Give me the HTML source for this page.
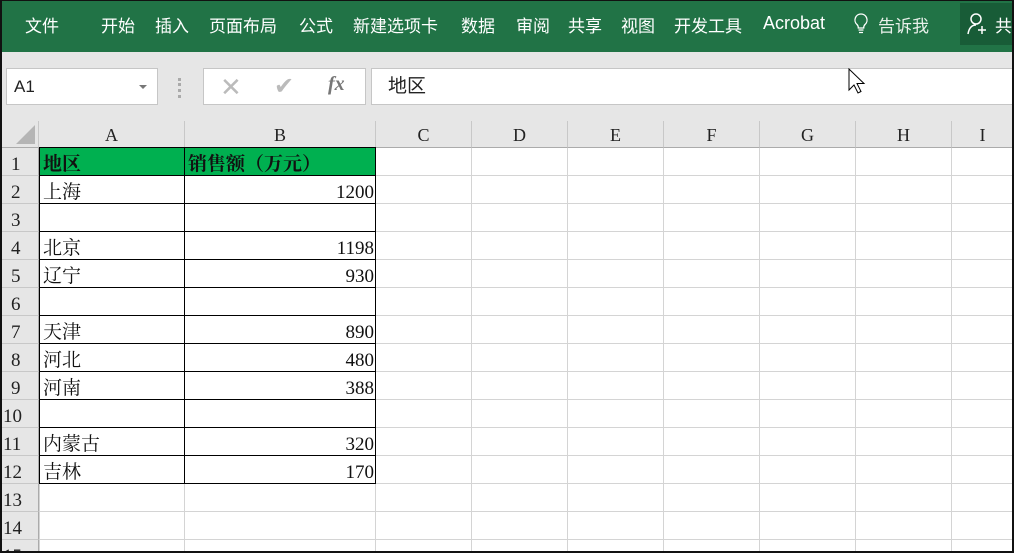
<!DOCTYPE html>
<html style="width:1014px;height:553px;overflow:hidden"><head><meta charset="utf-8"><style>
*{margin:0;padding:0;box-sizing:border-box}
body{width:1014px;height:553px;overflow:hidden;background:#fff;position:relative;font-family:"Liberation Sans","Noto Sans CJK SC",sans-serif}
.a{position:absolute}
#frame{left:0;top:0;width:1014px;height:553px;border:2px solid #111;border-top-width:1px;z-index:10;pointer-events:none}
#rib{left:0;top:0;width:1014px;height:52px;background:#217346;color:#fff;font-size:17px}
#rib span{position:absolute;top:12px;white-space:nowrap}
#gray{left:0;top:52px;width:1014px;height:69px;background:#e6e6e6}
.box{background:#fff;border:1px solid #c6c6c6}
.ser{font-family:"Liberation Serif","Noto Serif CJK SC",serif}
.ch{position:absolute;top:121px;height:27px;border-right:1px solid #c8c8c8;border-bottom:1px solid #ababab;background:#e6e6e6;text-align:center;font-size:18px;line-height:29px;color:#222}
.rh{position:absolute;left:2px;width:37px;height:28px;border-bottom:1px solid #c8c8c8;border-right:1px solid #ababab;background:#e6e6e6;font-size:19px;line-height:33px;padding-left:9px;color:#222;overflow:hidden}
.c{position:absolute;font-size:19px;line-height:35px;height:28px;white-space:nowrap;color:#111}
</style></head><body>
<div class="a" id="rib">
<span style="left:25px">文件</span><span style="left:101px">开始</span><span style="left:155px">插入</span><span style="left:209px">页面布局</span><span style="left:299px">公式</span><span style="left:353px">新建选项卡</span><span style="left:461px">数据</span><span style="left:516px">审阅</span><span style="left:568px">共享</span><span style="left:621px">视图</span><span style="left:674px">开发工具</span><span style="left:763px;top:13px;font-size:18px">Acrobat</span>
<svg class="a" style="left:853px;top:12px" width="16" height="24" viewBox="0 0 16 24"><path d="M8 2a6 6 0 0 0-4 10.5c1 1 1.3 2 1.3 3.5h5.4c0-1.5.3-2.5 1.3-3.5A6 6 0 0 0 8 2zM5.5 18h5M6 20.5h4" fill="none" stroke="#fff" stroke-width="1.3"/></svg>
<span style="left:878px;color:#e8f0ea">告诉我</span>
<div class="a" style="left:960px;top:3px;width:54px;height:42px;background:#185c37"></div>
<svg class="a" style="left:966px;top:12px" width="24" height="24" viewBox="0 0 24 24"><circle cx="10" cy="7" r="5" fill="none" stroke="#fff" stroke-width="1.5"/><path d="M2 22c1-6 4-9 8-9M16 14v8M12 18h8" fill="none" stroke="#fff" stroke-width="1.5"/></svg>
<span style="left:995px">共</span>
</div>
<div class="a" id="gray"></div>
<div class="a box" style="left:6px;top:68px;width:152px;height:37px;font-size:17px;line-height:36px;padding-left:7px;color:#222">A1</div>
<div class="a" style="left:139px;top:85px;width:0;height:0;border-left:4px solid transparent;border-right:4px solid transparent;border-top:4px solid #777"></div>
<div class="a" style="left:178px;top:78px;width:3px;height:20px;border-left:3px dotted #aaa"></div>
<div class="a box" style="left:203px;top:68px;width:163px;height:37px"></div>
<div class="a" style="left:220px;top:72px;font-size:26px;color:#bbb">✕</div>
<div class="a" style="left:274px;top:72px;font-size:24px;color:#bbb">✔</div>
<div class="a ser" style="left:328px;top:73px;font-size:20px;font-style:italic;font-weight:bold;color:#777">fx</div>
<div class="a box" style="left:371px;top:68px;width:643px;height:37px;font-size:19px;line-height:35px;padding-left:16px;color:#222">地区</div>
<svg class="a" style="left:848px;top:68px" width="20" height="28" viewBox="0 0 20 28"><path d="M1 1v21l5-5 4 8 3-1.5-4-8h7z" fill="#fff" stroke="#000" stroke-width="1"/></svg>
<div class="ch" style="left:2px;width:37px"><div class="a" style="right:3px;bottom:3px;width:0;height:0;border-left:19px solid transparent;border-bottom:19px solid #b5b5b5"></div></div>
<div class="ch ser" style="left:39px;width:146px">A</div>
<div class="ch ser" style="left:185px;width:191px">B</div>
<div class="ch ser" style="left:376px;width:96px">C</div>
<div class="ch ser" style="left:472px;width:96px">D</div>
<div class="ch ser" style="left:568px;width:96px">E</div>
<div class="ch ser" style="left:664px;width:96px">F</div>
<div class="ch ser" style="left:760px;width:96px">G</div>
<div class="ch ser" style="left:856px;width:96px">H</div>
<div class="ch ser" style="left:952px;width:62px">I</div>
<svg class="a" style="left:0;top:0" width="1014" height="553">
<g stroke="#d4d4d4" stroke-width="1">
<path d="M39.5 148v405M184.5 148v405M375.5 148v405M471.5 148v405M567.5 148v405M663.5 148v405M759.5 148v405M855.5 148v405M951.5 148v405"/>
<path d="M39 175.5h975M39 203.5h975M39 231.5h975M39 259.5h975M39 287.5h975M39 315.5h975M39 343.5h975M39 371.5h975M39 399.5h975M39 427.5h975M39 455.5h975M39 483.5h975M39 511.5h975M39 539.5h975"/>
</g>
<rect x="39" y="148" width="337" height="27" fill="#00b050"/>
<g stroke="#000" stroke-width="1" fill="none">
<rect x="39.5" y="147.5" width="336" height="336"/>
<path d="M184.5 148v336"/>
<path d="M39 175.5h337M39 203.5h337M39 231.5h337M39 259.5h337M39 287.5h337M39 315.5h337M39 343.5h337M39 371.5h337M39 399.5h337M39 427.5h337M39 455.5h337"/>
</g>
</svg>
<div class="ser">
<div class="rh" style="top:148px">1</div><div class="rh" style="top:176px">2</div><div class="rh" style="top:204px">3</div><div class="rh" style="top:232px">4</div><div class="rh" style="top:260px">5</div><div class="rh" style="top:288px">6</div><div class="rh" style="top:316px">7</div><div class="rh" style="top:344px">8</div><div class="rh" style="top:372px">9</div><div class="rh" style="top:400px;padding-left:1px">10</div><div class="rh" style="top:428px;padding-left:1px">11</div><div class="rh" style="top:456px;padding-left:1px">12</div><div class="rh" style="top:484px;padding-left:1px">13</div><div class="rh" style="top:512px;padding-left:1px">14</div><div class="rh" style="top:540px;height:13px;padding-left:1px">15</div>
<div class="c" style="left:43px;top:147px;font-weight:bold">地区</div>
<div class="c" style="left:188px;top:147px;font-weight:bold">销售额（万元）</div>
<div class="c" style="left:43px;top:175px">上海</div><div class="c" style="right:640px;top:175px">1200</div>
<div class="c" style="left:43px;top:231px">北京</div><div class="c" style="right:640px;top:231px">1198</div>
<div class="c" style="left:43px;top:259px">辽宁</div><div class="c" style="right:640px;top:259px">930</div>
<div class="c" style="left:43px;top:315px">天津</div><div class="c" style="right:640px;top:315px">890</div>
<div class="c" style="left:43px;top:343px">河北</div><div class="c" style="right:640px;top:343px">480</div>
<div class="c" style="left:43px;top:371px">河南</div><div class="c" style="right:640px;top:371px">388</div>
<div class="c" style="left:43px;top:427px">内蒙古</div><div class="c" style="right:640px;top:427px">320</div>
<div class="c" style="left:43px;top:455px">吉林</div><div class="c" style="right:640px;top:455px">170</div>
</div>
<div class="a" id="frame"></div>
</body></html>
